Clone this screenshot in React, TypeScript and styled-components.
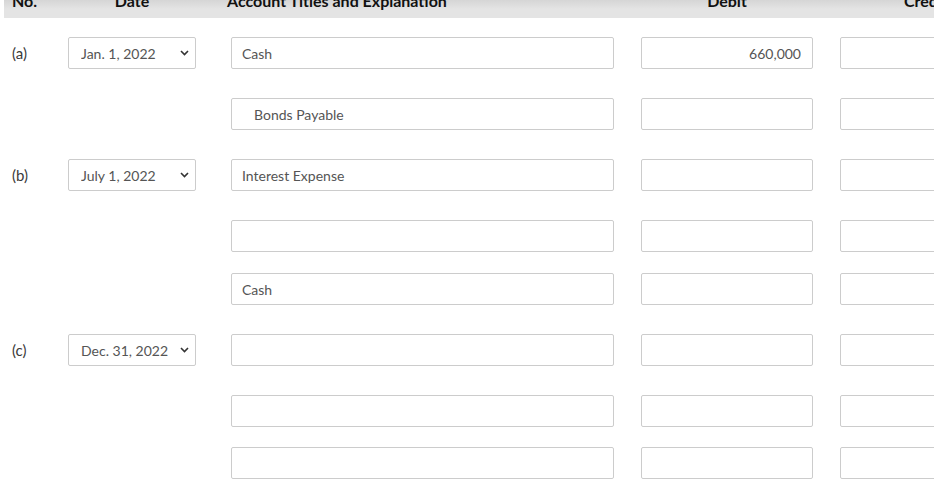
import React from 'react'
import styled, { createGlobalStyle } from 'styled-components'

const GlobalStyle = createGlobalStyle`
  html, body {
    margin: 0;
    padding: 0;
    background: #fff;
    font-family: Lato, "Open Sans", Arial, sans-serif;
    overflow: hidden;
  }
`

interface Entry {
  label?: string
  date?: string
  account: string
  indent?: boolean
  debit?: string
  credit?: string
  gap: number
}

const entries: Entry[] = [
  { label: '(a)', date: 'Jan. 1, 2022', account: 'Cash', debit: '660,000', gap: 19 },
  { account: 'Bonds Payable', indent: true, gap: 29 },
  { label: '(b)', date: 'July 1, 2022', account: 'Interest Expense', gap: 29 },
  { account: '', gap: 29 },
  { account: 'Cash', gap: 21 },
  { label: '(c)', date: 'Dec. 31, 2022', account: '', gap: 29 },
  { account: '', gap: 29 },
  { account: '', gap: 20 },
]

const columns = '64px 128px 35px 383px 27px 172px 27px 172px'

const Chevron = () => (
  <svg width='9' height='6' viewBox='0 0 9 6'>
    <path d='M1 1l3.5 3.5L8 1' fill='none' stroke='#333' strokeWidth='1.6' />
  </svg>
)

const App = () => {
  return (
    <>
      <GlobalStyle />
      <Table>
        <Header>
          <HeadCell align='left' style={{ paddingLeft: 8 }}>No.</HeadCell>
          <HeadCell>Date</HeadCell>
          <span />
          <HeadCell align='left' style={{ marginLeft: -4 }}>Account Titles and Explanation</HeadCell>
          <span />
          <HeadCell>Debit</HeadCell>
          <span />
          <HeadCell>Credit</HeadCell>
        </Header>
        {entries.map((e, i) => (
          <Row key={i} gap={e.gap}>
            <Label>{e.label}</Label>
            {e.date ? (
              <SelectWrap>
                <DateSelect defaultValue={e.date}>
                  <option>{e.date}</option>
                </DateSelect>
                <ChevronBox>
                  <Chevron />
                </ChevronBox>
              </SelectWrap>
            ) : (
              <span />
            )}
            <span />
            <TextBox indent={e.indent} defaultValue={e.account} />
            <span />
            <AmountBox defaultValue={e.debit ?? ''} />
            <span />
            <AmountBox defaultValue={e.credit ?? ''} />
          </Row>
        ))}
      </Table>
    </>
  )
}

const Table = styled.div`
  margin-left: 4px;
  width: 930px;
  overflow: hidden;
`

const Header = styled.div`
  display: grid;
  grid-template-columns: ${columns};
  align-items: center;
  height: 36px;
  margin-top: -18px;
  background: linear-gradient(#d2d2d2 0, #d2d2d2 16px, #e4e4e4 27px, #e4e4e4 100%);
`

const HeadCell = styled.div<{ align?: string }>`
  font-size: 16px;
  font-weight: 700;
  color: #111;
  white-space: nowrap;
  text-align: ${(p) => p.align || 'center'};
`

const Row = styled.div<{ gap: number }>`
  display: grid;
  grid-template-columns: ${columns};
  align-items: center;
  height: 32px;
  margin-top: ${(p) => p.gap}px;
`

const Label = styled.div`
  padding-left: 8px;
  font-size: 15px;
  color: #3a3a3a;
`

const SelectWrap = styled.div`
  position: relative;
  height: 32px;
`

const DateSelect = styled.select`
  appearance: none;
  width: 100%;
  height: 32px;
  box-sizing: border-box;
  border: 1px solid #ccc;
  border-radius: 2px;
  background: #fff;
  padding: 0 0 0 12px;
  font-family: Lato, "Open Sans", Arial, sans-serif;
  font-size: 14px;
  color: #555;
  outline: none;
`

const ChevronBox = styled.span`
  position: absolute;
  right: 7px;
  top: 13px;
  display: flex;
  pointer-events: none;
`

const Field = styled.input`
  height: 32px;
  box-sizing: border-box;
  width: 100%;
  border: 1px solid #ccc;
  border-radius: 2px;
  background: #fff;
  font-family: Lato, "Open Sans", Arial, sans-serif;
  font-size: 14px;
  color: #555;
  outline: none;
  margin: 0;
`

const TextBox = styled(Field)<{ indent?: boolean }>`
  padding: 0 10px 0 ${(p) => (p.indent ? 22 : 10)}px;
`

const AmountBox = styled(Field)`
  text-align: right;
  padding: 0 11px;
`

export default App
